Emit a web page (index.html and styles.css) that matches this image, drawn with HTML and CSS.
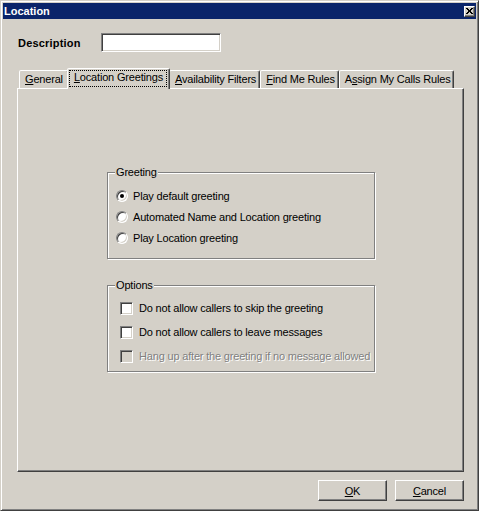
FILE: index.html
```html
<!DOCTYPE html>
<html>
<head>
<meta charset="utf-8">
<title>Location</title>
<link rel="stylesheet" href="styles.css">
</head>
<body>
<div class="window">
  <div class="titlebar">
    <span class="title">Location</span>
    <span class="close">
      <svg width="7" height="6" viewBox="0 0 7 6" shape-rendering="crispEdges">
        <path d="M0 0h2v1h-2zM5 0h2v1h-2zM1 1h2v1h-2zM4 1h2v1h-2zM2 2h3v1h-3zM2 3h3v1h-3zM1 4h2v1h-2zM4 4h2v1h-2zM0 5h2v1h-2zM5 5h2v1h-2z" fill="#000"/>
      </svg>
    </span>
  </div>
  <div class="content">
    <div class="desc-row">
      <span class="desc-label">Description</span>
      <span class="textbox"></span>
    </div>
    <div class="tabs">
      <span class="tab"><u>G</u>eneral</span>
      <span class="tab active"><span class="focus"><u>L</u>ocation Greetings</span></span>
      <span class="tab"><u>A</u>vailability Filters</span>
      <span class="tab"><u>F</u>ind Me Rules</span>
      <span class="tab">A<u>s</u>sign My Calls Rules</span>
    </div>
    <div class="panel">
      <div class="group greeting">
        <span class="caption">Greeting</span>
        <div class="row"><span class="radio checked"></span><span>Play default greeting</span></div>
        <div class="row"><span class="radio"></span><span>Automated Name and Location greeting</span></div>
        <div class="row"><span class="radio"></span><span>Play Location greeting</span></div>
      </div>
      <div class="group options">
        <span class="caption">Options</span>
        <div class="crow"><span class="check"></span><span>Do not allow callers to skip the greeting</span></div>
        <div class="crow"><span class="check"></span><span>Do not allow callers to leave messages</span></div>
        <div class="crow disabled"><span class="check"></span><span>Hang up after the greeting if no message allowed</span></div>
      </div>
    </div>
    <div class="buttons">
      <span class="btn"><u>O</u>K</span>
      <span class="btn"><u>C</u>ancel</span>
    </div>
  </div>
</div>
</body>
</html>
```

FILE: styles.css
```css
* { box-sizing: border-box; }
html, body { margin: 0; padding: 0; }
body {
  font-family: "Liberation Sans", Arial, sans-serif;
  font-size: 11px;
  letter-spacing: -0.18px;
  color: #000;
  background: #d4d0c8;
}
u { text-decoration: underline; text-underline-offset: 1px; }

.window {
  width: 479px;
  height: 511px;
  background: #d4d0c8;
  border: 1px solid;
  border-color: #d4d0c8 #404040 #404040 #d4d0c8;
  box-shadow: inset 1px 1px #fff, inset -1px -1px #808080;
  padding: 2px;
  display: flex;
  flex-direction: column;
}

.titlebar {
  height: 16px;
  background: #0a246a;
  color: #fff;
  font-weight: bold;
  letter-spacing: 0;
  display: flex;
  align-items: center;
  justify-content: space-between;
  padding: 0 1px 0 1px;
}
.title { font-size: 11px; line-height: 16px; }
.close {
  width: 11px;
  height: 11px;
  background: #d4d0c8;
  border: 1px solid;
  border-color: #fff #404040 #404040 #fff;
  box-shadow: inset -1px -1px #808080;
  display: flex;
  align-items: center;
  justify-content: center;
}
.close svg { display: block; }

.content {
  flex: 1;
  display: flex;
  flex-direction: column;
  padding: 14px 12px 0 14px;
}

.desc-row {
  display: flex;
  align-items: center;
  height: 19px;
}
.desc-label {
  width: 84px;
  font-weight: bold;
  letter-spacing: 0.2px;
  padding-left: 1px;
}
.textbox {
  width: 120px;
  height: 19px;
  background: #fff;
  border: 1px solid;
  border-color: #808080 #fff #fff #808080;
  box-shadow: inset 1px 1px #404040, inset -1px -1px #d4d0c8;
}

.tabs {
  display: flex;
  align-items: flex-end;
  height: 20px;
  margin-top: 16px;
  padding-left: 2px;
  position: relative;
  z-index: 1;
}
.tab {
  height: 18px;
  line-height: 17px;
  padding: 0 3px 0 5px;
  background: #d4d0c8;
  border: 1px solid;
  border-bottom: 0;
  border-color: #fff #404040 transparent #fff;
  box-shadow: inset -1px 0 #808080;
  border-radius: 2px 2px 0 0;
  white-space: nowrap;
}
.tab:first-child { padding: 0 5px 0 5px; }
.tab.active {
  height: 21px;
  margin: 0 -1px -1px -2px;
  padding: 1px 2px 2px 1px;
  position: relative;
  z-index: 2;
}
.focus {
  display: block;
  height: 17px;
  line-height: 15px;
  padding: 0 4px 0 5px;
  outline: 1px dotted #000;
  outline-offset: -1px;
}

.panel {
  height: 384px;
  border: 1px solid;
  border-color: #fff #404040 #404040 #fff;
  box-shadow: inset -1px -1px #808080;
  display: flex;
  flex-direction: column;
  align-items: flex-start;
  padding: 83px 0 0 89px;
}

.group {
  width: 268px;
  position: relative;
  border: 1px solid #808080;
  box-shadow: inset 1px 1px #fff, 1px 1px #fff;
}
.caption {
  position: absolute;
  top: -7px;
  left: 7px;
  padding: 0 1px;
  line-height: 13px;
  background: #d4d0c8;
}
.greeting { padding: 12px 0 10px 8px; }
.options { padding: 10px 0 3px 12px; margin-top: 26px; }

.row {
  display: flex;
  align-items: center;
  gap: 5px;
  height: 21px;
  white-space: nowrap;
}
.crow {
  display: flex;
  align-items: center;
  gap: 6px;
  height: 24px;
  white-space: nowrap;
}

.radio {
  width: 12px;
  height: 12px;
  flex: none;
  border-radius: 50%;
  background: #fff;
  border: 1px solid;
  border-color: #808080 #fff #fff #808080;
  box-shadow: inset 1px 1px #404040, inset -1px -1px #d4d0c8;
  display: flex;
  align-items: center;
  justify-content: center;
}
.radio.checked::after {
  content: "";
  width: 4px;
  height: 4px;
  border-radius: 50%;
  background: #000;
}

.check {
  width: 13px;
  height: 13px;
  flex: none;
  background: #fff;
  border: 1px solid;
  border-color: #808080 #fff #fff #808080;
  box-shadow: inset 1px 1px #404040, inset -1px -1px #d4d0c8;
}
.crow.disabled { color: #808080; text-shadow: 1px 1px #fff; }
.crow.disabled .check { background: #d4d0c8; }

.buttons {
  display: flex;
  justify-content: flex-end;
  gap: 8px;
  margin-top: 8px;
}
.btn {
  width: 69px;
  height: 21px;
  background: #d4d0c8;
  border: 1px solid;
  border-color: #fff #404040 #404040 #fff;
  box-shadow: inset -1px -1px #808080;
  display: flex;
  align-items: center;
  justify-content: center;
}
```
